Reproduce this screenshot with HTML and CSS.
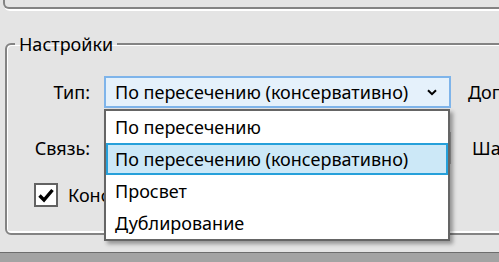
FILE: index.html
```html
<!DOCTYPE html>
<html lang="ru">
<head>
    <meta charset="UTF-8">
    <meta name="viewport" content="width=device-width, initial-scale=1.0">
    <title>Настройки</title>
    <link rel="stylesheet" href="styles.css">
</head>
<body>
    <div class="top-box"></div>

    <fieldset class="group">
        <legend>Настройки</legend>
        <div class="form-grid">
            <label class="lbl">Тип:</label>
            <div class="combo-wrap">
                <div class="combo">
                    <span>По пересечению (консервативно)</span>
                    <svg class="chevron" width="10" height="7" viewBox="0 0 10 7"><path d="M1 1.2 L5 5.2 L9 1.2" fill="none" stroke="#000" stroke-width="2"/></svg>
                </div>
                <ul class="popup">
                    <li>По пересечению</li>
                    <li class="selected">По пересечению (консервативно)</li>
                    <li>Просвет</li>
                    <li>Дублирование</li>
                </ul>
            </div>
            <span class="side">Дополнительно:</span>

            <label class="lbl">Связь:</label>
            <div class="combo plain"></div>
            <span class="side second">Шаг:</span>
        </div>

        <div class="check-row">
            <span class="checkbox">
                <svg width="20" height="20" viewBox="0 0 20 20"><path d="M3.5 10.5 L8 15 L16.5 5" fill="none" stroke="#000" stroke-width="3.4"/></svg>
            </span>
            <span>Консервативная проверка</span>
        </div>
    </fieldset>

    <div class="status-bar"></div>
</body>
</html>
```

FILE: styles.css
```css
html { overflow: hidden; }
body { margin: 0; height: 262px; background: #e4e4e4; font-family: "Noto Sans", sans-serif; font-size: 18px; color: #000; display: flex; flex-direction: column; overflow: hidden; }

.top-box { flex: none; width: 600px; height: 7px; margin-left: 3px; border: 2px solid #838383; border-top: none; border-bottom-left-radius: 6px; box-shadow: 1px 2px 0 #fff; }

.group { flex: none; width: 600px; margin: 24px 0 0 5px; padding: 21px 0 26px 0; border: 2px solid #838383; border-radius: 6px; box-shadow: inset 1px 1px 0 #fff, inset -1px -2px 0 #fff; }
.group legend { margin-left: 8px; padding: 0 4px; line-height: 22px; }

.form-grid { display: grid; grid-template-columns: 83px 347px auto; column-gap: 14px; row-gap: 24px; align-items: center; }
.lbl { text-align: right; line-height: 32px; }
.side { margin-left: 3px; white-space: nowrap; }
.side.second { margin-left: 7px; }

.combo-wrap { position: relative; }
.combo { height: 32px; box-sizing: border-box; border: 2px solid #7eb4ea; background: #e5f1fb; display: flex; align-items: center; justify-content: space-between; padding: 0 12px 0 9px; white-space: nowrap; }
.combo.plain { border-color: #adadad; background: #e1e1e1; }
.chevron { margin-top: 1px; }

.popup { position: absolute; top: 33px; left: 0; width: 346px; margin: 0; padding: 0; list-style: none; background: #fff; border: 2px solid #656565; box-sizing: border-box; box-shadow: 3px 3px 4px rgba(0,0,0,0.35); z-index: 10; }
.popup li { height: 32px; line-height: 32px; padding-left: 9px; white-space: nowrap; box-sizing: border-box; }
.popup li.selected { border: 2px solid #26a0da; background: #cce8f7; line-height: 28px; padding-left: 7px; }

.check-row { display: flex; align-items: center; gap: 10px; margin: 19px 0 0 27px; white-space: nowrap; }
.checkbox { width: 24px; height: 24px; box-sizing: border-box; border: 2px solid #626262; background: #fff; display: flex; align-items: center; justify-content: center; }

.status-bar { margin-top: auto; height: 9px; border-top: 1px solid #6d6d6d; background: #a3a3a3; }
```
